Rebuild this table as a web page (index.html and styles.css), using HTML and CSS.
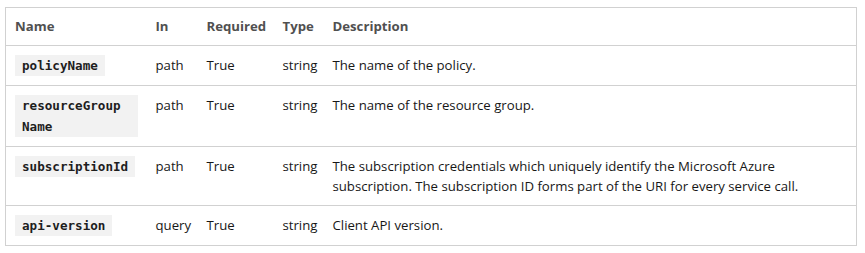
FILE: index.html
```html
<!DOCTYPE html>
<html>
<head>
<meta charset="UTF-8">
<title>URI Parameters</title>
<link rel="stylesheet" href="styles.css">
</head>
<body>
<table class="params">
	<colgroup>
		<col class="colName">
		<col class="colIn">
		<col class="colReq">
		<col class="colType">
		<col>
	</colgroup>
	<thead>
		<tr>
			<th>Name</th>
			<th>In</th>
			<th>Required</th>
			<th>Type</th>
			<th>Description</th>
		</tr>
	</thead>
	<tbody>
		<tr>
			<td><code>policyName</code></td>
			<td>path</td>
			<td>True</td>
			<td>string</td>
			<td>The name of the policy.</td>
		</tr>
		<tr>
			<td><code class="wrap">resourceGroup<wbr>Name</code></td>
			<td>path</td>
			<td>True</td>
			<td>string</td>
			<td>The name of the resource group.</td>
		</tr>
		<tr>
			<td><code>subscriptionId</code></td>
			<td>path</td>
			<td>True</td>
			<td>string</td>
			<td class="desc">The subscription credentials which uniquely identify the Microsoft Azure subscription. The subscription ID forms part of the URI for every service call.</td>
		</tr>
		<tr>
			<td><code>api-version</code></td>
			<td>query</td>
			<td>True</td>
			<td>string</td>
			<td>Client API version.</td>
		</tr>
	</tbody>
</table>
</body>
</html>
```

FILE: styles.css
```css
* {
	margin: 0px;
	padding: 0px;
	box-sizing: border-box;
}

body {
	margin: 7px 0 0 5px;
	background: #ffffff;
	font-family: 'Segoe UI', 'Open Sans', 'Noto Sans', sans-serif;
	font-size: 13.2px;
	color: #171717;
}

.params {
	width: 852px;
	border-collapse: collapse;
	table-layout: fixed;
	border: 1px solid #d1d1d1;
}

.colName { width: 141px; }
.colIn { width: 51px; }
.colReq { width: 76px; }
.colType { width: 50px; }

.params th {
	text-align: left;
	font-weight: bold;
	color: #505050;
	line-height: 21px;
	padding: 8px 9px;
	border-bottom: 1px solid #d1d1d1;
}

.params td {
	vertical-align: top;
	line-height: 20px;
	padding: 9px 9px 9px;
	border-bottom: 1px solid #d1d1d1;
}

.params code {
	display: inline-block;
	vertical-align: top;
	max-width: 100%;
	background: #f2f2f2;
	font-family: 'DejaVu Sans Mono', monospace;
	font-size: 12.6px;
	font-weight: bold;
	line-height: 21px;
	padding: 0 7px;
	color: #1e1e1e;
}

.params code.wrap {
	width: 100%;
}

.desc {
	padding-right: 40px;
}
```
